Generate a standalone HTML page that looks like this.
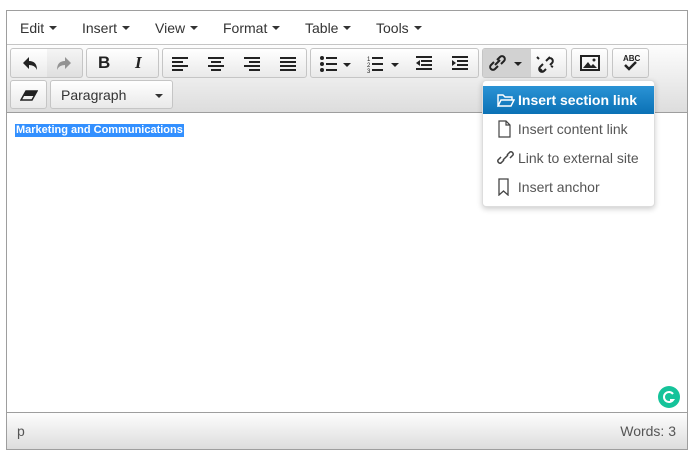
<!DOCTYPE html>
<html><head><style>
*{box-sizing:border-box;margin:0;padding:0}
body{width:694px;height:458px;background:#fff;font-family:"Liberation Sans",Arial,sans-serif;position:relative;overflow:hidden;color:#333}
.ed{position:absolute;left:6px;top:10px;width:682px;height:440px;border:1px solid #9e9e9e}
.menu{position:absolute;left:0;top:0;width:680px;height:34px;background:#fff;border-bottom:1px solid #c5c5c5;font-size:14px}
.menu span{position:absolute;top:9px}
.car{display:inline-block;width:0;height:0;border-left:4px solid transparent;border-right:4px solid transparent;border-top:4px solid #333;vertical-align:middle;margin-left:5px;margin-top:-2px}
.tb{position:absolute;left:0;top:34px;width:680px;height:68px;background:linear-gradient(#fdfdfd,#ddd);border-bottom:1px solid #9e9e9e}
.b{position:absolute;height:30px;border:1px solid #c5c5c5;border-radius:3px;background:linear-gradient(#fff,#e9e9e9);display:flex;align-items:center;justify-content:center}
.b svg{display:block}
.content{position:absolute;left:0;top:102px;width:680px;height:299px;background:#fff}
.sel{position:absolute;left:8px;top:11px;background:#3390ff;color:#fff;font-size:11px;font-weight:bold;font-family:"Liberation Sans",sans-serif;padding:0 1px;line-height:13px}
.status{position:absolute;left:0;top:401px;width:680px;height:37px;background:linear-gradient(#fdfdfd,#ddd);border-top:1px solid #9e9e9e;font-size:14px;color:#555}
.dd{position:absolute;left:482px;top:80px;width:173px;height:127px;background:#fff;border:1px solid #ddd;border-radius:4px;box-shadow:0 2px 6px rgba(0,0,0,.2);font-size:14px;color:#555}
.it{position:absolute;left:0;width:171px;height:28px;display:flex;align-items:center;padding-left:14px}
.it svg{margin-right:3px}
</style></head><body>
<div class="ed">
<div class="menu">
<span style="left:13px">Edit<i class="car"></i></span>
<span style="left:75px">Insert<i class="car"></i></span>
<span style="left:148px">View<i class="car"></i></span>
<span style="left:216px">Format<i class="car"></i></span>
<span style="left:298px">Table<i class="car"></i></span>
<span style="left:369px">Tools<i class="car"></i></span>
</div>
<div class="tb">
<div class="b" style="left:3px;top:3px;width:73px"><svg width="72" height="28"><path d="M12 14 l6-6 v4 q8 0 8 9 q-2-5-8-5 v4z" fill="#222"/><path d="M60 14 l-6-6 v4 q-8 0-8 9 q2-5 8-5 v4z" fill="#999"/><rect x="36" y="0" width="36" height="28" fill="#000" opacity=".04"/></svg></div>
<div class="b" style="left:79px;top:3px;width:73px"><span style="font-weight:bold;font-size:17px;position:absolute;left:11px;color:#222">B</span><span style="font-style:italic;font-weight:bold;font-size:17px;position:absolute;left:48px;font-family:'Liberation Serif',serif;color:#222">I</span></div>
<div class="b" style="left:155px;top:3px;width:145px"><svg width="144" height="28"><g fill="#222"><rect x="9" y="8" width="16" height="2"/><rect x="9" y="12" width="11" height="2"/><rect x="9" y="16" width="16" height="2"/><rect x="9" y="20" width="11" height="2"/>
<rect x="45" y="8" width="16" height="2"/><rect x="48" y="12" width="10" height="2"/><rect x="45" y="16" width="16" height="2"/><rect x="48" y="20" width="10" height="2"/>
<rect x="81" y="8" width="16" height="2"/><rect x="86" y="12" width="11" height="2"/><rect x="81" y="16" width="16" height="2"/><rect x="86" y="20" width="11" height="2"/>
<rect x="117" y="8" width="16" height="2"/><rect x="117" y="12" width="16" height="2"/><rect x="117" y="16" width="16" height="2"/><rect x="117" y="20" width="16" height="2"/></g></svg></div>
<div class="b" style="left:303px;top:3px;width:169px"><svg width="168" height="28"><g fill="#222"><circle cx="11" cy="9" r="2"/><circle cx="11" cy="15" r="2"/><circle cx="11" cy="21" r="2"/><rect x="15" y="8" width="11" height="2"/><rect x="15" y="14" width="11" height="2"/><rect x="15" y="20" width="11" height="2"/><path d="M32 14h8l-4 4z"/>
<text x="56" y="12" font-size="6" font-family="Liberation Sans">1</text><text x="56" y="18" font-size="6" font-family="Liberation Sans">2</text><text x="56" y="24" font-size="6" font-family="Liberation Sans">3</text><rect x="61" y="8" width="11" height="2"/><rect x="61" y="14" width="11" height="2"/><rect x="61" y="20" width="11" height="2"/><path d="M80 14h8l-4 4z"/>
<rect x="105" y="7" width="16" height="2"/><rect x="110" y="11" width="11" height="2"/><rect x="110" y="15" width="11" height="2"/><rect x="105" y="19" width="16" height="2"/><path d="M105 14l4-3v6z"/>
<rect x="141" y="7" width="16" height="2"/><rect x="146" y="11" width="11" height="2"/><rect x="146" y="15" width="11" height="2"/><rect x="141" y="19" width="16" height="2"/><path d="M145 14l-4-3v6z"/></g></svg></div>
<div class="b" style="left:475px;top:3px;width:85px;overflow:hidden"><div style="position:absolute;left:0;top:0;width:48px;height:30px;background:#d2d2d2"></div><svg width="84" height="28" style="position:relative"><g fill="none" stroke="#222" stroke-width="2"><path d="M15 17l-3 3a2.5 2.5 0 0 1-4-4l3-3M14 11l3-3a2.5 2.5 0 0 1 4 4l-3 3M12 16l5-5"/>
<path d="M56 10l-2-2M67 8l-3 3m-4 4l-3 3a2.5 2.5 0 0 0 4 4l2-2m4-4l2-2a2.5 2.5 0 0 0-4-4l-2 2M70 18l-2-1M57 20l2 2"/></g><path d="M31 13h8l-4 4z" fill="#222"/></svg></div>
<div class="b" style="left:564px;top:3px;width:37px"><svg width="20" height="16"><rect x="1" y="1" width="18" height="14" fill="none" stroke="#222" stroke-width="2"/><path d="M3 13l5-6 3 4 2-2 4 4z" fill="#222"/><circle cx="14" cy="5" r="1.5" fill="#222"/></svg></div>
<div class="b" style="left:605px;top:3px;width:37px"><svg width="22" height="22"><text x="3" y="9" font-size="8" font-weight="bold" font-family="Liberation Sans" fill="#222">ABC</text><path d="M5 13l4 4 7-7" fill="none" stroke="#222" stroke-width="2.5"/></svg></div>
<div class="b" style="left:3px;top:35px;width:37px;height:29px"><svg width="18" height="12"><path d="M1 11l5-9h11l-5 9z" fill="none" stroke="#222" stroke-width="1.5"/><path d="M6 2h11l-3 5h-11z" fill="#222"/></svg></div>
<div class="b" style="left:43px;top:35px;width:123px;height:29px;justify-content:flex-start;padding-left:10px;font-size:14px">Paragraph<i class="car" style="position:absolute;left:104px;top:13px;margin:0"></i></div>
</div>
<div class="content"><span class="sel">Marketing and Communications</span>
<div style="position:absolute;left:651px;top:273px;width:22px;height:22px;border-radius:50%;background:#15c39a"><svg width="22" height="22"><path d="M15 8a5 5 0 1 0 0 6h-3" fill="none" stroke="#fff" stroke-width="2"/></svg></div></div>
<div class="status"><span style="position:absolute;left:10px;top:10px">p</span><span style="position:absolute;right:11px;top:10px">Words: 3</span></div>
</div>
<div class="dd">
<div class="it" style="top:5px;background:linear-gradient(#2a93d5,#0b71b5);color:#fff;font-weight:bold;"><svg width="18" height="14"><path d="M1 13V2h5l2 2h7v3M1 13l3-6h13l-3 6z" fill="none" stroke="#fff" stroke-width="1.4"/></svg>Insert section link</div>
<div class="it" style="top:34px"><svg width="14" height="18"><path d="M2 1h7l4 4v12h-11z M9 1v4h4" fill="none" stroke="#444" stroke-width="1.2"/></svg>&nbsp;Insert content link</div>
<div class="it" style="top:63px"><svg width="18" height="16"><g fill="none" stroke="#444" stroke-width="1.5"><path d="M7 10l-3 3a2.3 2.3 0 0 1-3-3l3-3M10 5l3-3a2.3 2.3 0 0 1 3 3l-3 3M6 10l5-5"/></g></svg>Link to external site</div>
<div class="it" style="top:92px"><svg width="14" height="18"><path d="M2 1h9v16l-4.5-4l-4.5 4z" fill="none" stroke="#444" stroke-width="1.3"/></svg>&nbsp;Insert anchor</div>
</div>
</body></html>
